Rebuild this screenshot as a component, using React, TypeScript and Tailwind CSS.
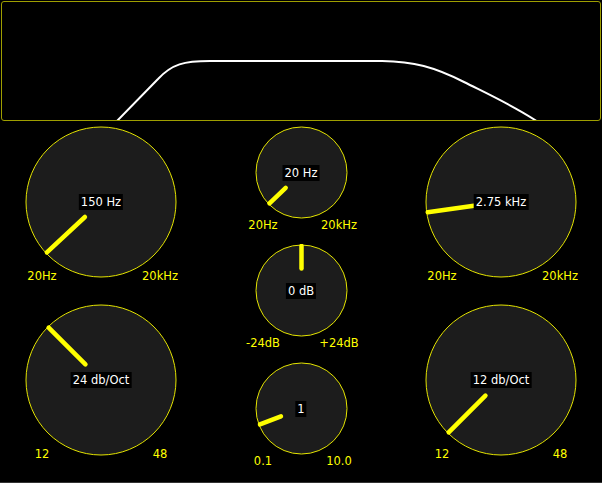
import React from "react";

type KnobProps = {
  size: "lg" | "sm";
  angle: number;
  value: string;
  minLabel: string;
  maxLabel: string;
};

const font = { fontFamily: '"DejaVu Sans", Verdana, sans-serif' };

function Knob({ size, angle, value, minLabel, maxLabel }: KnobProps) {
  const lg = size === "lg";
  const box = lg ? 152 : 93;
  const c = box / 2;
  const r = lg ? 75 : 45.5;
  const a = (angle * Math.PI) / 180;
  const inner = 22;
  const x1 = c + inner * Math.sin(a);
  const y1 = c - inner * Math.cos(a);
  const x2 = c + (r - 1) * Math.sin(a);
  const y2 = c - (r - 1) * Math.cos(a);

  return (
    <div className={lg ? "relative h-[152px] w-[152px]" : "relative h-[93px] w-[93px]"}>
      <svg width={box} height={box} className="block">
        <circle cx={c} cy={c} r={r} fill="#1c1c1c" stroke="#e4e400" strokeWidth={1} />
        <line x1={x1} y1={y1} x2={x2} y2={y2} stroke="#ffff00" strokeWidth={4.5} strokeLinecap="round" />
      </svg>
      <span className="absolute left-1/2 top-1/2 -translate-x-1/2 -translate-y-1/2 whitespace-nowrap bg-black px-[2px] text-[11.5px] leading-[16px] text-white">
        {value}
      </span>
      <span
        className={
          lg
            ? "absolute left-[17px] top-[150px] -translate-x-1/2 -translate-y-1/2 whitespace-nowrap text-[11.5px] leading-[14px] text-[#ffff00]"
            : "absolute left-[8.5px] top-[99px] -translate-x-1/2 -translate-y-1/2 whitespace-nowrap text-[11.5px] leading-[14px] text-[#ffff00]"
        }
      >
        {minLabel}
      </span>
      <span
        className={
          lg
            ? "absolute left-[135px] top-[150px] -translate-x-1/2 -translate-y-1/2 whitespace-nowrap text-[11.5px] leading-[14px] text-[#ffff00]"
            : "absolute left-[84.5px] top-[99px] -translate-x-1/2 -translate-y-1/2 whitespace-nowrap text-[11.5px] leading-[14px] text-[#ffff00]"
        }
      >
        {maxLabel}
      </span>
    </div>
  );
}

export default function App() {
  return (
    <div className="h-[483px] w-[602px] overflow-hidden border-b border-[#333333] bg-black" style={font}>
      {/* response curve */}
      <div className="relative ml-[1px] mt-[1px] h-[120px] w-[600px] overflow-hidden rounded-[3px] border border-[#9e9e00] bg-black">
        <svg className="absolute inset-0" width={598} height={118} viewBox="2 2 598 118">
          <path
            d="M116,122 L158,79 C172,64 184,61 210,61 L382,61 C414,61.5 434,67 464,82 C492,96 516,107 538,122"
            fill="none"
            stroke="#ffffff"
            strokeWidth={2}
          />
        </svg>
      </div>

      <div className="mt-[5px] flex justify-between px-[25px]">
        <div className="flex flex-col gap-[26px]">
          <Knob size="lg" angle={-133} value="150 Hz" minLabel="20Hz" maxLabel="20kHz" />
          <Knob size="lg" angle={-45} value="24 db/Oct" minLabel="12" maxLabel="48" />
        </div>
        <div className="flex flex-col gap-[25px]">
          <Knob size="sm" angle={-134} value="20 Hz" minLabel="20Hz" maxLabel="20kHz" />
          <Knob size="sm" angle={0} value="0 dB" minLabel="-24dB" maxLabel="+24dB" />
          <Knob size="sm" angle={-111} value="1" minLabel="0.1" maxLabel="10.0" />
        </div>
        <div className="flex flex-col gap-[26px]">
          <Knob size="lg" angle={-98} value="2.75 kHz" minLabel="20Hz" maxLabel="20kHz" />
          <Knob size="lg" angle={-135} value="12 db/Oct" minLabel="12" maxLabel="48" />
        </div>
      </div>
    </div>
  );
}
